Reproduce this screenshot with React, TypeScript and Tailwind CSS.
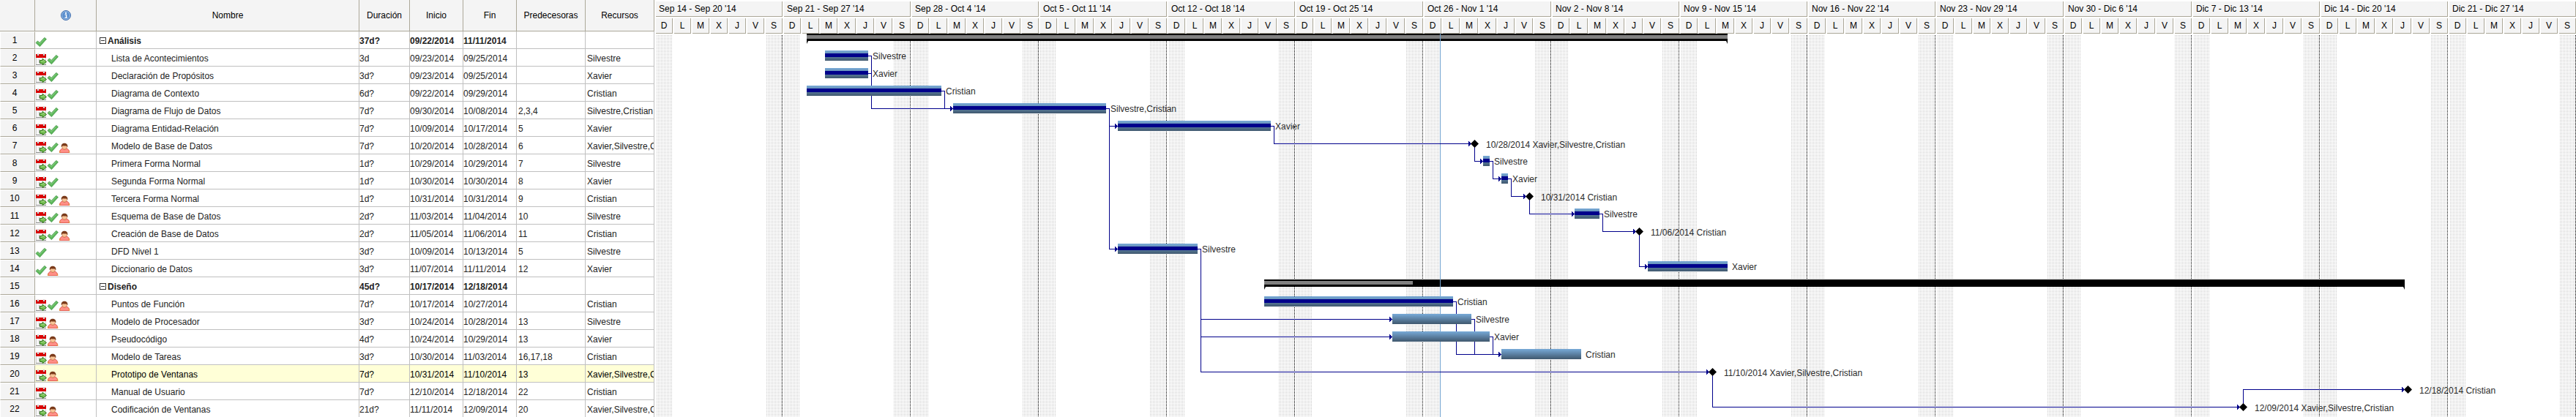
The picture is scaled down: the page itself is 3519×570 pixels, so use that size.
import React from "react";

type Task = {
  name: string;
  duration: string;
  start: string;
  finish: string;
  pred?: string;
  resources?: string;
  icons: string;
  kind: "summary" | "bar" | "milestone";
  from: number;
  to: number;
  done: number;
};

// icons: c = calendar, v = check, p = person
// from / to: days counted from Sunday, Sep 14
const task = (
  kind: Task["kind"],
  name: string,
  duration: string,
  start: string,
  finish: string,
  pred: string,
  resources: string,
  icons: string,
  from: number,
  to: number,
  done = 1,
): Task => ({ kind, name, duration, start, finish, pred, resources, icons, from, to, done });

const TASKS: Task[] = [
  task("summary", "Análisis", "37d?", "09/22/2014", "11/11/2014", "", "", "v", 8, 58),
  task("bar", "Lista de Acontecimientos", "3d", "09/23/2014", "09/25/2014", "", "Silvestre", "cv", 9, 11),
  task("bar", "Declaración de Propósitos", "3d?", "09/23/2014", "09/25/2014", "", "Xavier", "cv", 9, 11),
  task("bar", "Diagrama de Contexto", "6d?", "09/22/2014", "09/29/2014", "", "Cristian", "cv", 8, 15),
  task("bar", "Diagrama de Flujo de Datos", "7d?", "09/30/2014", "10/08/2014", "2,3,4", "Silvestre,Cristian", "cv", 16, 24),
  task("bar", "Diagrama Entidad-Relación", "7d?", "10/09/2014", "10/17/2014", "5", "Xavier", "cv", 25, 33),
  task("milestone", "Modelo de Base de Datos", "7d?", "10/20/2014", "10/28/2014", "6", "Xavier,Silvestre,Cristian", "cvp", 36, 44),
  task("bar", "Primera Forma Normal", "1d?", "10/29/2014", "10/29/2014", "7", "Silvestre", "cv", 45, 45),
  task("bar", "Segunda Forma Normal", "1d?", "10/30/2014", "10/30/2014", "8", "Xavier", "cv", 46, 46),
  task("milestone", "Tercera Forma Normal", "1d?", "10/31/2014", "10/31/2014", "9", "Cristian", "cvp", 47, 47),
  task("bar", "Esquema de Base de Datos", "2d?", "11/03/2014", "11/04/2014", "10", "Silvestre", "cvp", 50, 51),
  task("milestone", "Creación de Base de Datos", "2d?", "11/05/2014", "11/06/2014", "11", "Cristian", "cvp", 52, 53),
  task("bar", "DFD Nivel 1", "3d?", "10/09/2014", "10/13/2014", "5", "Silvestre", "v", 25, 29),
  task("bar", "Diccionario de Datos", "3d?", "11/07/2014", "11/11/2014", "12", "Xavier", "vp", 54, 58),
  task("summary", "Diseño", "45d?", "10/17/2014", "12/18/2014", "", "", "", 33, 95, 0.13),
  task("bar", "Puntos de Función", "7d?", "10/17/2014", "10/27/2014", "", "Cristian", "cvp", 33, 43),
  task("bar", "Modelo de Procesador", "3d?", "10/24/2014", "10/28/2014", "13", "Silvestre", "cp", 40, 44, 0),
  task("bar", "Pseudocódigo", "4d?", "10/24/2014", "10/29/2014", "13", "Xavier", "cp", 40, 45, 0),
  task("bar", "Modelo de Tareas", "3d?", "10/30/2014", "11/03/2014", "16,17,18", "Cristian", "cp", 46, 50, 0),
  task("milestone", "Prototipo de Ventanas", "7d?", "10/31/2014", "11/10/2014", "13", "Xavier,Silvestre,Cristian", "cp", 47, 57, 0),
  task("milestone", "Manual de Usuario", "7d?", "12/10/2014", "12/18/2014", "22", "Cristian", "c", 87, 95, 0),
  task("milestone", "Codificación de Ventanas", "21d?", "11/11/2014", "12/09/2014", "20", "Xavier,Silvestre,Cristian", "cp", 58, 86, 0),
];

const SELECTED_ROW = 20;

const WEEKS = [
  "Sep 14 - Sep 20 '14",
  "Sep 21 - Sep 27 '14",
  "Sep 28 - Oct 4 '14",
  "Oct 5 - Oct 11 '14",
  "Oct 12 - Oct 18 '14",
  "Oct 19 - Oct 25 '14",
  "Oct 26 - Nov 1 '14",
  "Nov 2 - Nov 8 '14",
  "Nov 9 - Nov 15 '14",
  "Nov 16 - Nov 22 '14",
  "Nov 23 - Nov 29 '14",
  "Nov 30 - Dic 6 '14",
  "Dic 7 - Dic 13 '14",
  "Dic 14 - Dic 20 '14",
  "Dic 21 - Dic 27 '14",
];
const DAYS = ["D", "L", "M", "X", "J", "V", "S"];

const DAY = 25;
const ROW = 24;
const TODAY_X = 1071;
const NAVY = "#00008b";

// One hour is lost on screen when daylight saving ends
const dst = (d: number) => (d >= 42 ? 1 : 0);
const startX = (t: Task) => t.from * DAY + 6 - dst(t.from);
const endX = (t: Task) => t.to * DAY + 15 - dst(t.to);
const markX = (t: Task) => t.to * DAY + 18;
const rowTop = (i: number) => i * ROW - 3;

function CalendarIcon() {
  return (
    <svg viewBox="0 0 16 16" className="size-4 flex-none" aria-hidden="true">
      <rect x="1" y="5" width="14" height="10" fill="#f6f6f6" />
      <rect x="1" y="15" width="14" height="1" fill="#8c8c8c" />
      <rect x="1" y="6" width="1" height="9" fill="#d0d0d0" />
      <rect x="14" y="6" width="1" height="9" fill="#d0d0d0" />
      <rect x="1" y="1" width="14" height="5" fill="#dc0000" />
      <rect x="3" y="0" width="2" height="3" fill="#d8d8d8" />
      <rect x="11" y="0" width="2" height="3" fill="#d8d8d8" />
      <rect x="3" y="3" width="2" height="1" fill="#8a1010" />
      <rect x="11" y="3" width="2" height="1" fill="#8a1010" />
      <path d="M5.5 8V13" stroke="#b4b4b4" />
      <path d="M6.5 9.5H10V7.2L15.5 11.5L10 15.8V13.5H6.5Z" fill="#74bf52" stroke="#33761c" />
      <path d="M7.4 10.6H11V9.4L13.4 11.4" stroke="#a9dd8c" strokeWidth=".8" fill="none" />
    </svg>
  );
}

function CheckIcon() {
  return (
    <svg viewBox="0 0 16 16" className="size-4 flex-none" aria-hidden="true">
      <path d="M1 9.6L3.4 7L6.2 9.4L12.8 2.4L15.4 4.6L6.4 14.6Z" fill="#5cb85a" stroke="#3a8f3c" strokeWidth=".8" strokeLinejoin="round" />
      <path d="M2.4 9.3L3.5 8.3L6.2 10.8L13 3.8" stroke="#95d68e" strokeWidth=".8" fill="none" />
    </svg>
  );
}

function PersonIcon() {
  return (
    <svg viewBox="0 0 16 16" className="size-4 flex-none" aria-hidden="true">
      <path d="M1.4 15.6C1.2 12.6 3 10.8 5.4 10L8 11.4L10.8 10C13.2 10.8 15 12.6 14.8 15.6Z" fill="#ff8f86" stroke="#dd4a3e" strokeWidth=".9" />
      <path d="M1.4 15.6L2.2 13.6M14.8 15.6L14 13.6" stroke="#e0a030" strokeWidth="1.2" />
      <path d="M4.6 7C4.6 9.6 6.2 11.2 8 11.2S11.6 9.6 11.6 7L10.6 5.4H5.6Z" fill="#f7c295" stroke="#b5713c" strokeWidth=".6" />
      <path d="M3.8 8C3.4 4.4 5.4 2.8 8 2.8S12.8 4.4 12.4 8C11.6 7.8 11.6 6.6 10.8 6.4C9 7 7 6.2 5.6 6.2C4.8 6.6 4.6 7.8 3.8 8Z" fill="#7a3a1a" />
    </svg>
  );
}

function InfoIcon() {
  return (
    <svg viewBox="0 0 16 16" className="size-4" role="img" aria-label="Indicadores">
      <circle cx="8" cy="8" r="6.5" fill="#5b8fce" stroke="#3f6cab" />
      <circle cx="8" cy="8" r="5.5" fill="none" stroke="#a9c8ea" strokeWidth=".8" />
      <circle cx="8" cy="4.9" r="1.1" fill="#fff" />
      <path d="M6.6 7.2H8.6V11M6.4 11.2H9.9" stroke="#fff" strokeWidth="1.3" fill="none" />
    </svg>
  );
}

function Indicators({ icons }: { icons: string }) {
  return (
    <div className="flex pt-1">
      {icons.split("").map((k) => (k === "c" ? <CalendarIcon key={k} /> : k === "v" ? <CheckIcon key={k} /> : <PersonIcon key={k} />))}
    </div>
  );
}

const HEAD = "border-r border-b border-[#aca899] bg-[#f4f4f4] p-0 text-center align-middle font-normal text-black";
const CELL = "h-6 overflow-hidden border-r border-b border-[#c0c0c0] p-0 align-middle whitespace-nowrap";

function TaskTable() {
  return (
    <table className="w-[894px] flex-none table-fixed border-separate border-spacing-0 self-start">
      <colgroup>
        <col className="w-12" />
        <col className="w-[84px]" />
        <col />
        <col className="w-[69px]" />
        <col className="w-[73px]" />
        <col className="w-[73px]" />
        <col className="w-[94px]" />
        <col className="w-[94px]" />
      </colgroup>
      <thead>
        <tr className="h-[43px]">
          <th className={HEAD} />
          <th className={HEAD}>
            <div className="flex justify-center">
              <InfoIcon />
            </div>
          </th>
          {["Nombre", "Duración", "Inicio", "Fin", "Predecesoras", "Recursos"].map((h) => (
            <th key={h} className={HEAD}>
              {h}
            </th>
          ))}
        </tr>
      </thead>
      <tbody>
        {TASKS.map((t, i) => {
          const summary = t.kind === "summary";
          return (
            <tr
              key={t.name}
              className={`${summary ? "font-bold" : ""} ${i + 1 === SELECTED_ROW ? "bg-[#ffffd7] text-black" : "text-[#222222]"}`}
            >
              <th
                scope="row"
                className="h-6 border-t border-r border-b border-l border-t-white border-r-[#aca899] border-b-[#aca899] border-l-white bg-[#f4f4f4] p-0 pr-2 text-center font-normal text-black"
              >
                {i + 1}
              </th>
              <td className={CELL}>
                <Indicators icons={t.icons} />
              </td>
              <td className={`${CELL} ${summary ? "pl-1" : "pl-5"}`}>
                <div className="flex items-center gap-0.5 pt-0.5">
                  {summary && (
                    <button type="button" aria-label={`Contraer ${t.name}`} className="flex size-[9px] items-center justify-center border border-[#333333] bg-white">
                      <span className="h-px w-[5px] bg-[#333333]" />
                    </button>
                  )}
                  {t.name}
                </div>
              </td>
              <td className={`${CELL} pt-0.5`}>{t.duration}</td>
              <td className={`${CELL} pt-0.5`}>{t.start}</td>
              <td className={`${CELL} pt-0.5`}>{t.finish}</td>
              <td className={`${CELL} pt-0.5 pl-0.5`}>{t.pred}</td>
              <td className={`${CELL} pt-0.5 pl-0.5`}>{t.resources}</td>
            </tr>
          );
        })}
      </tbody>
    </table>
  );
}

function TimeScale() {
  return (
    <div className="flex pt-0.5">
      {WEEKS.map((w) => (
        <div key={w} className="flex w-[175px] flex-none flex-col gap-0.5 pr-0.5">
          <div className="h-[21px] border-r border-b border-[#aca899] bg-[#f4f4f4] pl-1 leading-5">{w}</div>
          <div className="flex gap-0.5">
            {DAYS.map((d) => (
              <div key={d} className="h-[21px] w-[23px] flex-none border-r border-b border-[#aca899] bg-[#f4f4f4] text-center leading-5">
                {d}
              </div>
            ))}
          </div>
        </div>
      ))}
    </div>
  );
}

function links() {
  return TASKS.flatMap((t, to) =>
    (t.pred ? t.pred.split(",") : []).map((p) => {
      const from = Number(p) - 1;
      const source = TASKS[from];
      const fromMark = source.kind === "milestone";
      return {
        id: `${from}-${to}`,
        x1: fromMark ? markX(source) : endX(source),
        xv: fromMark ? markX(source) : endX(source) + 4,
        x2: t.kind === "milestone" ? markX(t) - 4 : startX(t),
        y1: rowTop(from) + 9,
        y2: rowTop(to) + 9,
      };
    }),
  );
}

function Chart() {
  return (
    <div className="relative min-h-0 flex-1">
      <svg className="block h-full w-full" shapeRendering="crispEdges" aria-hidden="true">
        <defs>
          <pattern id="dots" width="2" height="2" patternUnits="userSpaceOnUse">
            <rect x="1" y="0" width="1" height="1" fill="#c6c6c6" />
          </pattern>
          <linearGradient id="steel" x1="0" y1="0" x2="0" y2="1">
            <stop offset="0" stopColor="#78aad8" />
            <stop offset="1" stopColor="#40586e" />
          </linearGradient>
        </defs>
        {WEEKS.map((w, i) => (
          <g key={w}>
            <rect x={i * 175} y="2" width="22" height="100%" fill="url(#dots)" />
            <rect x={i * 175 + 150} y="2" width="22" height="100%" fill="url(#dots)" />
            <line x1={i * 175 + 172.5} x2={i * 175 + 172.5} y1="2" y2="100%" stroke="#000" strokeDasharray="1 1" />
          </g>
        ))}
        {TASKS.map((t, i) => {
          if (t.kind !== "summary") return null;
          const x = startX(t);
          const e = endX(t);
          const y = rowTop(i) + 3;
          const reach = Math.round((e - x) * t.done);
          return (
            <g key={t.name}>
              <rect x={x} y={y} width={e - x} height="10" fill="#000" />
              <rect x={x} y={y + 2} width={reach} height="5" fill="#808080" />
              <path d={`M${x} ${y + 10}h2l-2 4z M${e} ${y + 10}h-2l2 4z`} fill="#000" shapeRendering="auto" />
            </g>
          );
        })}
        <rect x={TODAY_X} y="0" width="1" height="100%" fill="#74a4d0" />
        {links().map((l) => (
          <g key={l.id}>
            <path d={`M${l.x1} ${l.y1 + 0.5}H${l.xv + 0.5}V${l.y2 + 0.5}H${l.x2}`} fill="none" stroke={NAVY} />
            <path d={`M${l.x2 - 4} ${l.y2 - 3.5}L${l.x2} ${l.y2 + 0.5}L${l.x2 - 4} ${l.y2 + 4.5}Z`} fill={NAVY} />
          </g>
        ))}
        {TASKS.map((t, i) => {
          const y = rowTop(i);
          if (t.kind === "bar") {
            const x = startX(t);
            const w = endX(t) - x;
            return (
              <g key={t.name}>
                <rect x={x} y={y + 2} width={w} height="14" fill="url(#steel)" />
                {t.done > 0 && <rect x={x} y={y + 6} width={w} height="5" fill={NAVY} />}
              </g>
            );
          }
          if (t.kind === "milestone") {
            return (
              <path key={t.name} d={`M${markX(t) + 0.5} ${y + 4}l5.5 5.5l-5.5 5.5l-5.5 -5.5z`} fill="#000" shapeRendering="auto" />
            );
          }
          return null;
        })}
      </svg>
      {TASKS.map((t, i) => {
        if (t.kind === "summary") return null;
        const mark = t.kind === "milestone";
        return (
          <span
            key={t.name}
            className="absolute leading-4 whitespace-nowrap text-[#2b2b2b]"
            style={{ left: mark ? markX(t) + 16 : endX(t) + 6, top: rowTop(i) + (mark ? 3 : 2) }}
          >
            {mark ? `${t.finish} ${t.resources}` : t.resources}
          </span>
        );
      })}
    </div>
  );
}

export default function App() {
  return (
    <main className="flex h-screen gap-0.5 overflow-hidden bg-white font-['Liberation_Sans',Arial,sans-serif] text-xs text-black">
      <TaskTable />
      <section className="flex min-w-0 flex-1 flex-col overflow-hidden" aria-label="Diagrama de Gantt">
        <TimeScale />
        <Chart />
      </section>
    </main>
  );
}
